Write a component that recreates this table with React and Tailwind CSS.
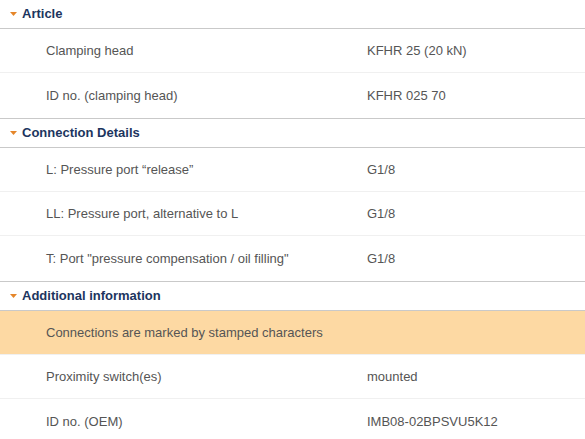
import React from 'react';

const sections = [
  {
    title: 'Article',
    rows: [
      { label: 'Clamping head', value: 'KFHR 25 (20 kN)' },
      { label: 'ID no. (clamping head)', value: 'KFHR 025 70' },
    ],
  },
  {
    title: 'Connection Details',
    rows: [
      { label: 'L: Pressure port \u201crelease\u201d', value: 'G1/8' },
      { label: 'LL: Pressure port, alternative to L', value: 'G1/8' },
      { label: 'T: Port "pressure compensation / oil filling"', value: 'G1/8' },
    ],
  },
  {
    title: 'Additional information',
    rows: [
      { label: 'Connections are marked by stamped characters', value: '', highlight: true },
      { label: 'Proximity switch(es)', value: 'mounted' },
      { label: 'ID no. (OEM)', value: 'IMB08-02BPSVU5K12' },
    ],
  },
];

const Section = ({ title, rows }) => (
  <div>
    {/* header */}
    <div className="flex items-center h-[30px] border-y border-[#c9c9c9]">
      <svg width="7" height="4" viewBox="0 0 7 4" className="ml-[10px] mr-[5px]">
        <polygon points="0,0 7,0 3.5,4" fill="#e5862a" />
      </svg>
      <span className="text-[13px] font-bold text-[#1c355e]">{title}</span>
    </div>
    {/* rows */}
    {rows.map((r, i) => {
      const last = i === rows.length - 1;
      return (
        <div
          key={i}
          className={`flex items-center text-[13px] text-[#555555] ${
            last ? 'h-[45px]' : 'h-[44px] border-b border-[#f0f0f0]'
          } ${r.highlight ? 'bg-[#fdd9a3]' : 'bg-white'}`}
        >
          <div className="pl-[46px] w-[367px] shrink-0">{r.label}</div>
          <div>{r.value}</div>
        </div>
      );
    })}
  </div>
);

export default function App() {
  return (
    <div
      className="w-[585px] h-[439px] overflow-hidden bg-white"
      style={{ fontFamily: '"Liberation Sans", Arial, sans-serif' }}
    >
      <div className="-mt-px">
        {sections.map((s) => (
          <Section key={s.title} {...s} />
        ))}
      </div>
    </div>
  );
}
